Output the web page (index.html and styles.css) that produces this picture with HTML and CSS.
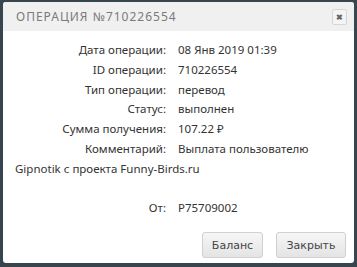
FILE: index.html
```html
<!DOCTYPE html>
<html>
  <head>
    <meta charset="UTF-8">
    <link rel="stylesheet" href="styles.css">
  </head>
  <body>
    <div class="dialog">
      <div class="dialog-header">
        <span class="dialog-title">Операция №710226554</span>
        <span class="dialog-close">&#x2716;</span>
      </div>
      <div class="dialog-body">
        <div class="row"><span class="label">Дата операции:</span>08 Янв 2019 01:39</div>
        <div class="row"><span class="label">ID операции:</span>710226554</div>
        <div class="row"><span class="label">Тип операции:</span>перевод</div>
        <div class="row"><span class="label">Статус:</span>выполнен</div>
        <div class="row"><span class="label">Сумма получения:</span>107.22 &#x20BD;</div>
        <div class="row"><span class="label">Комментарий:</span>Выплата пользователю</div>
        <div class="row">Gipnotik с проекта Funny-Birds.ru</div>
        <div class="row row-gap"><span class="label">От:</span>P75709002</div>
      </div>
      <div class="dialog-buttons">
        <button class="btn btn-balance">Баланс</button>
        <button class="btn btn-close">Закрыть</button>
      </div>
    </div>
  </body>
</html>
```

FILE: styles.css
```css
body {
  margin: 0;
  padding: 2px 3px 4px 3px;
  background: #37464e;
  font-family: "Noto Sans", sans-serif;
}
.dialog {
  width: 351px;
  height: 261px;
  background: #fff;
  border-radius: 3px;
  display: flex;
  flex-direction: column;
}
.dialog-header {
  height: 29px;
  background: #f0f0f0;
  border-radius: 3px 3px 0 0;
  display: flex;
  align-items: center;
  justify-content: space-between;
  padding: 0 6px 0 13px;
}
.dialog-title {
  text-transform: uppercase;
  font-size: 12px;
  letter-spacing: 1px;
  color: #7a7a7a;
}
.dialog-close {
  width: 13px;
  height: 14px;
  margin-right: 1px;
  border: 1px solid #d6d6d6;
  border-radius: 2px;
  background: #f4f4f4;
  color: #666;
  font-size: 8px;
  font-weight: bold;
  display: flex;
  align-items: center;
  justify-content: center;
}
.dialog-body {
  flex: 1;
  padding: 9px 12px 0 12px;
  font-size: 11.5px;
  color: #333;
  line-height: 19.8px;
}
.label {
  display: inline-block;
  width: 151px;
  text-align: right;
  margin-right: 12px;
}
.row-gap {
  margin-top: 19px;
}
.dialog-buttons {
  display: flex;
  justify-content: flex-end;
  gap: 13px;
  padding: 0 8px 5px 0;
}
.btn {
  height: 26px;
  padding: 0;
  border: 1px solid #d0d0d0;
  border-radius: 3px;
  background: linear-gradient(#f6f6f6, #e4e4e4);
  font-family: "DejaVu Sans", sans-serif;
  font-size: 11px;
  color: #444;
}
.btn-balance {
  width: 61px;
}
.btn-close {
  width: 70px;
}
```
